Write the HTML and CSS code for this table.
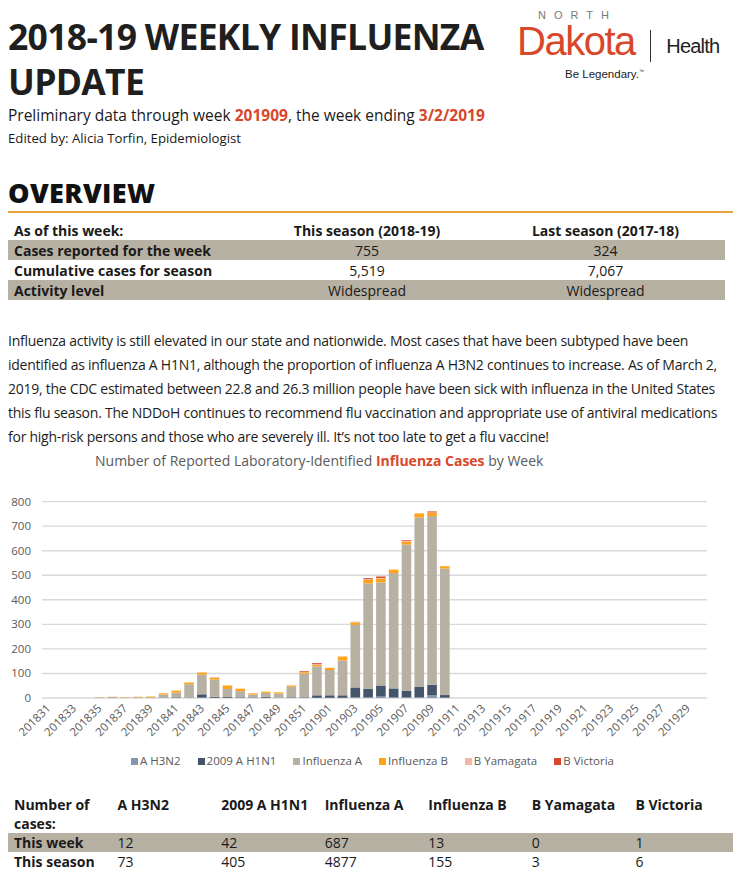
FILE: index.html
```html
<!DOCTYPE html>
<html lang="en">
<head>
<meta charset="utf-8">
<title>2018-19 Weekly Influenza Update</title>
<link rel="stylesheet" href="styles.css">
</head>
<body>
<div class="page">
  <header class="top">
    <div class="heading">
      <h1 class="title">2018-19 WEEKLY INFLUENZA UPDATE</h1>
      <p class="sub">Preliminary data through week <b class="hl">201909</b>, the week ending <b class="hl">3/2/2019</b></p>
      <p class="editor">Edited by: Alicia Torfin, Epidemiologist</p>
    </div>
    <div class="logo">
      <div class="logo-north">NORTH</div>
      <div class="logo-row">
        <span class="logo-dakota">Dakota</span>
        <span class="logo-bar"></span>
        <span class="logo-health">Health</span>
      </div>
      <div class="logo-tag">Be Legendary.<sup>™</sup></div>
    </div>
  </header>

  <h2 class="section">OVERVIEW</h2>
  <table class="overview">
    <colgroup><col class="c1"><col class="c2"><col class="c3"></colgroup>
    <tr class="head"><th class="lbl">As of this week:</th><th>This season (2018-19)</th><th>Last season (2017-18)</th></tr>
    <tr class="shade"><th class="lbl">Cases reported for the week</th><td>755</td><td>324</td></tr>
    <tr><th class="lbl">Cumulative cases for season</th><td>5,519</td><td>7,067</td></tr>
    <tr class="shade"><th class="lbl">Activity level</th><td>Widespread</td><td>Widespread</td></tr>
  </table>

  <p class="summary">Influenza activity is still elevated in our state and nationwide. Most cases that have been subtyped have been identified as influenza A H1N1, although the proportion of influenza A H3N2 continues to increase. As of March 2, 2019, the CDC estimated between 22.8 and 26.3 million people have been sick with influenza in the United States this flu season. The NDDoH continues to recommend flu vaccination and appropriate use of antiviral medications for high-risk persons and those who are severely ill. It’s not too late to get a flu vaccine!</p>

  <div class="chart">
    <div class="chart-title">Number of Reported Laboratory-Identified <b class="hl">Influenza Cases</b> by Week</div>
    <svg id="plot" class="plot" width="741" height="268" viewBox="0 0 741 268" xmlns="http://www.w3.org/2000/svg"></svg>
    <div class="legend">
      <span class="item"><i class="sw h3"></i>A H3N2</span>
      <span class="item"><i class="sw h1"></i>2009 A H1N1</span>
      <span class="item"><i class="sw fa"></i>Influenza A</span>
      <span class="item"><i class="sw fb"></i>Influenza B</span>
      <span class="item"><i class="sw by"></i>B Yamagata</span>
      <span class="item"><i class="sw bv"></i>B Victoria</span>
    </div>
  </div>

  <table class="cases">
    <tr class="head"><th>Number of cases:</th><th>A H3N2</th><th>2009 A H1N1</th><th>Influenza A</th><th>Influenza B</th><th>B Yamagata</th><th>B Victoria</th></tr>
    <tr class="shade"><th>This week</th><td>12</td><td>42</td><td>687</td><td>13</td><td>0</td><td>1</td></tr>
    <tr><th>This season</th><td>73</td><td>405</td><td>4877</td><td>155</td><td>3</td><td>6</td></tr>
  </table>
</div>
<script src="chart.js"></script>
</body>
</html>
```

FILE: styles.css
```css
* { box-sizing: border-box; }
body {
  margin: 0;
  background: #fff;
  color: #1a1a1a;
  font-family: "Open Sans", "Noto Sans", "DejaVu Sans", sans-serif;
}
.page { padding: 0 8px; }

.top {
  display: flex;
  justify-content: space-between;
  align-items: flex-start;
}
.heading { padding-top: 14px; }
.title {
  margin: 0;
  font-size: 35.5px;
  line-height: 45px;
  font-weight: 700;
  letter-spacing: -0.7px;
  width: 505px;
  color: #1f1f1f;
}
.sub {
  margin: 1px 0 0;
  font-size: 15.5px;
  line-height: 20px;
}
.editor {
  margin: 4px 0 0;
  font-size: 13.2px;
  line-height: 18px;
}
.hl { color: #d9472b; font-weight: 700; }

.logo {
  width: 215px;
  margin-top: 9px;
  margin-right: 8px;
  display: flex;
  flex-direction: column;
  font-family: "Liberation Sans", Arial, sans-serif;
}
.logo-north {
  padding-left: 25px;
  font-size: 11px;
  line-height: 13px;
  letter-spacing: 8px;
  color: #7a7a7a;
}
.logo-row {
  display: flex;
  align-items: flex-start;
  height: 40px;
  margin-top: -1px;
  padding-left: 4px;
}
.logo-dakota {
  font-size: 40px;
  line-height: 40px;
  color: #d9472b;
  letter-spacing: -1.5px;
}
.logo-bar {
  width: 1.5px;
  height: 32px;
  background: #333;
  margin: 9px 0 0 15px;
}
.logo-health {
  font-size: 20px;
  line-height: 22px;
  color: #222;
  margin: 14px 0 0 15px;
  letter-spacing: -0.8px;
}
.logo-tag {
  padding-left: 52px;
  margin-top: 4px;
  font-size: 11.5px;
  line-height: 13px;
  color: #222;
}
.logo-tag sup { font-size: 5px; vertical-align: 5px; }

.section {
  margin: 30px 0 0;
  font-size: 27px;
  line-height: 32px;
  font-weight: 800;
  letter-spacing: 0.4px;
  color: #111;
  padding-bottom: 2px;
  border-bottom: 2px solid #e8a33c;
}

table { border-collapse: collapse; }
.overview {
  width: 717px;
  margin-top: 7px;
  font-size: 14px;
}
.overview .c1 { width: 240px; }
.overview .c2 { width: 238px; }
.overview th, .overview td {
  height: 20px;
  padding: 0 6px;
  line-height: 19px;
  text-align: center;
}
.overview th { font-weight: 700; }
.overview .lbl { text-align: left; }
.overview td { font-weight: 400; }
.shade { background: #b7b1a4; }

.summary {
  margin: 29px 0 0;
  font-size: 14px;
  line-height: 24px;
  letter-spacing: -0.25px;
  color: #1d1d1d;
}

.chart { margin-top: 2px; }
.chart-title {
  padding-left: 87px;
  font-size: 14px;
  line-height: 20px;
  color: #5a5a5a;
}
.plot { display: block; margin: 18px 0 0 -8px; }
.plot text {
  font-family: "Open Sans", sans-serif;
  font-size: 11.5px;
  fill: #595959;
}
.legend {
  display: flex;
  justify-content: center;
  gap: 17px;
  margin-top: -3px;
  padding-left: 4px;
  font-size: 11.5px;
  line-height: 14px;
  color: #595959;
}
.legend .item { display: flex; align-items: center; }
.sw { display: inline-block; width: 7px; height: 7px; margin-right: 2px; }
.h3 { background: #8497b0; }
.h1 { background: #44546a; }
.fa { background: #b7b1a4; }
.fb { background: #ffa31a; }
.by { background: #f4b6a6; }
.bv { background: #d9472b; }

.cases {
  width: 725px;
  margin-top: 27px;
  font-size: 14px;
  table-layout: fixed;
}
.cases th, .cases td {
  width: 103px;
  padding: 0 6px;
  text-align: left;
  vertical-align: top;
  line-height: 19px;
}
.cases th { font-weight: 700; }
.cases td { font-weight: 400; }
.cases tr { height: 19px; }
```

FILE: chart.js
```javascript
(function () {
  var NS = "http://www.w3.org/2000/svg";
  var svg = document.getElementById("plot");
  var X0 = 42, X1 = 707, N = 52, Y0 = 209, K = 0.2455;
  var step = (X1 - X0) / N, bw = 9.6;
  var colors = ["#8497b0", "#44546a", "#b7b1a4", "#ffa31a", "#f4b6a6", "#d9472b"];
  // [A H3N2, 2009 A H1N1, Influenza A, Influenza B, B Yamagata, B Victoria]
  var data = {
    4: [0, 0, 2, 1, 0, 0], 5: [1, 1, 2, 1, 0, 0], 6: [0, 0, 1, 2, 0, 0],
    7: [0, 0, 3, 2, 0, 0], 8: [0, 0, 3, 3, 0, 0], 9: [1, 1, 12, 5, 0, 0],
    10: [1, 2, 19, 8, 0, 0], 11: [1, 1, 54, 7, 0, 0], 12: [2, 13, 80, 9, 0, 0],
    13: [1, 4, 70, 8, 3, 0], 14: [1, 3, 33, 14, 0, 0], 15: [1, 2, 25, 10, 0, 0],
    16: [2, 1, 11, 5, 0, 0], 17: [1, 4, 16, 5, 0, 0], 18: [1, 1, 16, 5, 0, 0],
    19: [1, 2, 43, 5, 1, 0], 20: [1, 2, 96, 6, 1, 3], 21: [1, 10, 118, 6, 3, 4],
    22: [1, 10, 103, 9, 0, 0], 23: [1, 10, 142, 16, 0, 0], 24: [3, 40, 255, 10, 3, 0],
    25: [3, 34, 430, 14, 3, 4], 26: [6, 45, 420, 14, 4, 6], 27: [3, 36, 470, 14, 0, 0],
    28: [3, 27, 595, 12, 3, 3], 29: [4, 41, 690, 17, 0, 0], 30: [12, 42, 687, 13, 2, 4],
    31: [2, 10, 515, 10, 1, 0]
  };
  function el(name, attrs, text) {
    var e = document.createElementNS(NS, name);
    for (var k in attrs) e.setAttribute(k, attrs[k]);
    if (text !== undefined) e.textContent = text;
    svg.appendChild(e);
    return e;
  }
  for (var v = 0; v <= 800; v += 100) {
    var y = Y0 - v * K;
    el("line", { x1: X0, x2: X1, y1: y, y2: y, stroke: "#d9d9d9", "stroke-width": 1.4 });
    el("text", { x: 31, y: y + 4, "text-anchor": "end" }, String(v));
  }
  for (var i = 0; i < N; i++) {
    var d = data[i];
    if (!d) continue;
    var x = X0 + i * step + (step - bw) / 2, base = Y0;
    for (var s = 0; s < 6; s++) {
      var h = d[s] * K;
      if (h <= 0) continue;
      el("rect", { x: x.toFixed(2), y: (base - h).toFixed(2), width: bw, height: h.toFixed(2), fill: colors[s] });
      base -= h;
    }
  }
  for (var j = 0; j < N; j += 2) {
    var wk = j < 22 ? "2018" + (31 + j) : "2019" + ("0" + (j - 21)).slice(-2);
    var cx = X0 + (j + 0.5) * step + 3, cy = Y0 + 11;
    el("text", { x: cx.toFixed(1), y: cy, "text-anchor": "end", transform: "rotate(-45 " + cx.toFixed(1) + " " + cy + ")" }, wk);
  }
})();
```
